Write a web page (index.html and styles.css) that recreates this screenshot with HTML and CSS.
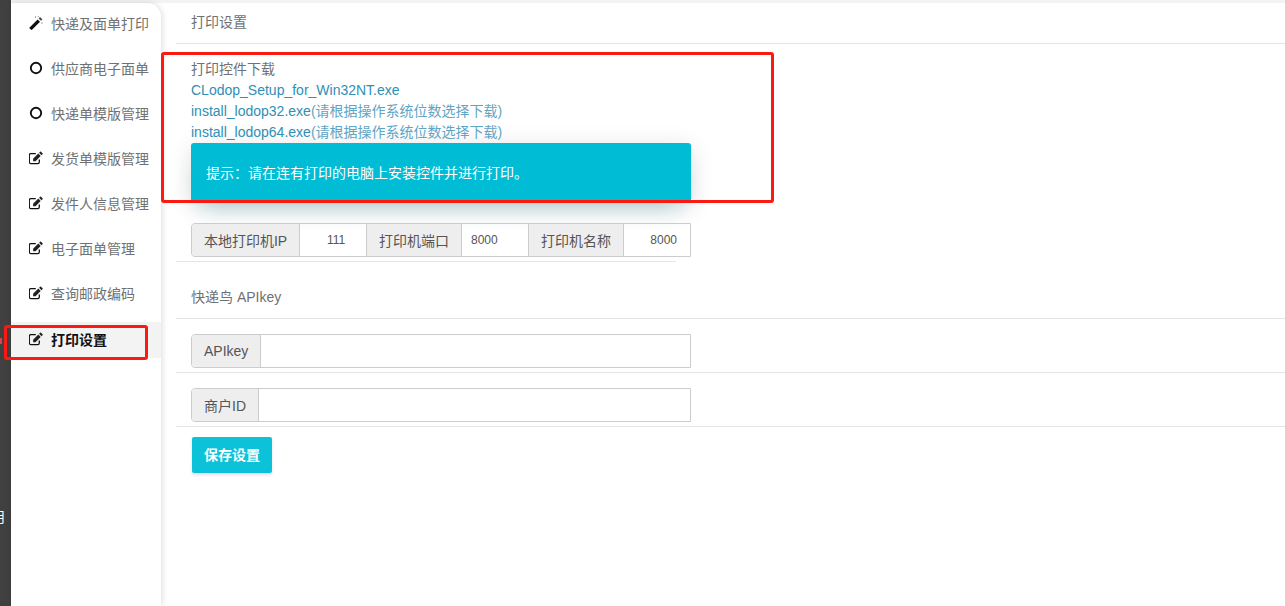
FILE: index.html
```html
<!DOCTYPE html>
<html lang="zh">
<head>
<meta charset="utf-8">
<title>打印设置</title>
<link rel="stylesheet" href="styles.css">
</head>
<body>
<svg class="defs" width="0" height="0" aria-hidden="true">
  <symbol id="i-edit" viewBox="0.7 0 14 14">
    <path d="M11 8.500v2.500A1.600 1.600 0 0 1 9.400 12.600H2.600A1.600 1.600 0 0 1 1 11V4.200A1.600 1.600 0 0 1 2.600 2.600H7.500" fill="none" stroke="#111" stroke-width="1.300"/>
    <path d="M4.800 7.800 10 2.600l2.400 2.400-5.200 5.200H4.800z" fill="#222"/>
    <path d="M10.800 1.800 11.800.8a.7.7 0 0 1 1 0l1.400 1.400a.7.7 0 0 1 0 1l-1 1z" fill="#222"/>
  </symbol>
  <symbol id="i-circle" viewBox="0 0 14 14">
    <circle cx="7" cy="7" r="5.200" fill="none" stroke="#111" stroke-width="1.900"/>
  </symbol>
  <symbol id="i-wand" viewBox="0 0 14 14">
    <path d="M.6 11.400 8.600 3.400l2.400 2.400-8 8a.6.6 0 0 1-.8 0L.6 12.200a.6.600 0 0 1 0-.8z" fill="#111"/>
    <path d="M9.600 2.400 11 1l2.400 2.400L12 4.800z" fill="#444"/>
    <path d="M6 .6h1v1H6zM12.400 6.400h1v1h-1zM8.800 0h.8v.8h-.8z" fill="#555"/>
  </symbol>
</svg>
<div class="shell">
  <div class="rail"></div>
  <nav class="sidebar">
    <a class="nav-item"><svg class="nav-icon"><use href="#i-wand"/></svg><span>快递及面单打印</span></a>
    <a class="nav-item"><svg class="nav-icon"><use href="#i-circle"/></svg><span>供应商电子面单</span></a>
    <a class="nav-item"><svg class="nav-icon"><use href="#i-circle"/></svg><span>快递单模版管理</span></a>
    <a class="nav-item"><svg class="nav-icon"><use href="#i-edit"/></svg><span>发货单模版管理</span></a>
    <a class="nav-item"><svg class="nav-icon"><use href="#i-edit"/></svg><span>发件人信息管理</span></a>
    <a class="nav-item"><svg class="nav-icon"><use href="#i-edit"/></svg><span>电子面单管理</span></a>
    <a class="nav-item"><svg class="nav-icon"><use href="#i-edit"/></svg><span>查询邮政编码</span></a>
    <a class="nav-item active"><svg class="nav-icon"><use href="#i-edit"/></svg><span>打印设置</span></a>
  </nav>
  <main class="main">
    <h2 class="title">打印设置</h2>
    <hr class="rule">
    <section class="downloads">
      <div class="dl-line">打印控件下载</div>
      <div class="dl-line"><a class="link">CLodop_Setup_for_Win32NT.exe</a></div>
      <div class="dl-line"><a class="link">install_lodop32.exe</a><span class="note">(请根据操作系统位数选择下载)</span></div>
      <div class="dl-line"><a class="link">install_lodop64.exe</a><span class="note">(请根据操作系统位数选择下载)</span></div>
    </section>
    <div class="alert">提示：请在连有打印的电脑上安装控件并进行打印。</div>
    <div class="group group-printer">
      <span class="addon a1">本地打印机IP</span><span class="val v1">111</span>
      <span class="addon a2">打印机端口</span><span class="val v2">8000</span>
      <span class="addon a3">打印机名称</span><span class="val v3">8000</span>
    </div>
    <hr class="rule short">
    <div class="subtitle">快递鸟 APIkey</div>
    <hr class="rule">
    <div class="group group-field"><span class="addon">APIkey</span><span class="fill"></span></div>
    <hr class="rule tight">
    <div class="group group-field"><span class="addon">商户ID</span><span class="fill"></span></div>
    <hr class="rule tight">
    <button class="save" type="button">保存设置</button>
  </main>
</div>
<div class="mark mark-a"></div>
<div class="mark mark-b"></div>
<div class="mark-dot"></div>
<span class="edge-glyph">用</span>
</body>
</html>
```
FILE: styles.css
```css
* { box-sizing: border-box; }
html, body { margin: 0; height: 100%; overflow: hidden; background: #fff; }
body {
  font-family: "Liberation Sans", "Noto Sans CJK SC", sans-serif;
  font-size: 14px;
  color: #6f7173;
  position: relative;
}
.defs { position: absolute; }
.shell { display: flex; height: 606px; padding-top: 3px; background: linear-gradient(#f3f3f4 3px, #fff 3px); }
.rail { position: absolute; left: 0; top: 0; bottom: 0; width: 11px; background: #404040; }
.sidebar {
  margin-left: 11px;
  width: 150px;
  flex: none;
  background: #fff;
  border-top-right-radius: 14px;
  box-shadow: 1px 0 6px rgba(0, 0, 0, .14);
  position: relative;
}
.nav-item {
  display: flex;
  align-items: center;
  height: 45px;
  padding: 0 0 5px 18px;
  gap: 8px;
  white-space: nowrap;
}
.nav-icon { width: 14px; height: 14px; flex: none; }
.nav-item.active {
  height: 36px;
  padding-bottom: 2px;
  margin-top: 4px;
  background: #f3f3f4;
  color: #111;
  font-weight: 700;
}
.main { flex: 1; min-width: 0; padding-left: 15px; }
.title { margin: 0; padding: 12px 0 0 15px; height: 40px; font-size: 14px; font-weight: 400; line-height: 15px; }
.rule { margin: 0; border: 0; border-top: 1px solid #e4e4e4; }
.rule.short { width: 500px; margin-top: 4px; }
.rule.tight { margin-top: 4px; }
.downloads { padding: 15px 0 0 15px; line-height: 21px; }
.dl-line { height: 21px; white-space: nowrap; }
.link { color: #2f8fb5; }
.note { color: #5fa5c4; }
.alert {
  margin: 0 0 0 15px;
  width: 500px;
  height: 60px;
  padding: 21px 15px 0;
  background: #00bcd4;
  color: #fff;
  border-radius: 3px 3px 0 0;
  line-height: 19px;
  box-shadow: 0 14px 24px -12px rgba(0, 120, 140, .3), 0 4px 25px rgba(0, 0, 0, .12);
}
.group {
  display: flex;
  margin-left: 15px;
  width: 500px;
  height: 34px;
  border: 1px solid #ccc;
  border-radius: 4px 0 0 4px;
  overflow: hidden;
}
.group-printer { margin-top: 20px; }
.group-field { margin-top: 15px; }
.addon {
  display: flex;
  align-items: center;
  justify-content: center;
  flex: none;
  background: #eee;
  color: #555;
  padding: 0 12px;
  border-right: 1px solid #ccc;
  white-space: nowrap;
}
.val {
  display: flex;
  align-items: center;
  flex: none;
  font-size: 12px;
  color: #555;
  border-right: 1px solid #ccc;
}
.a1 { width: 108px; }
.v1 { width: 67px; padding-left: 27px; }
.a2 { width: 95px; }
.v2 { width: 67px; padding-left: 9px; }
.a3 { width: 95px; }
.v3 { flex: 1; border-right: 0; justify-content: flex-end; padding-right: 13px; }
.fill { flex: 1; background: #fff; }
.subtitle { padding: 27px 0 0 15px; height: 56px; line-height: 16px; }
.save {
  display: block;
  margin: 10px 0 0 16px;
  padding: 0 0 2px;
  width: 80px;
  height: 36px;
  border: 0;
  border-radius: 2px;
  background: #0cc2d8;
  color: #fff;
  font: 700 14px "Liberation Sans", "Noto Sans CJK SC", sans-serif;
  box-shadow: 0 2px 3px rgba(156, 39, 176, .18);
}
.mark { position: absolute; border: 3px solid #fb1a12; border-radius: 3px; pointer-events: none; }
.mark-a { left: 161px; top: 52px; width: 613px; height: 151px; }
.mark-b { left: 4px; top: 325px; width: 144px; height: 35px; }
.mark-dot { position: absolute; left: 0; top: 338px; width: 2px; height: 6px; background: #e04040; }
.edge-glyph { position: absolute; left: -9px; top: 509px; font-size: 14px; color: #fff; line-height: 16px; }
```
